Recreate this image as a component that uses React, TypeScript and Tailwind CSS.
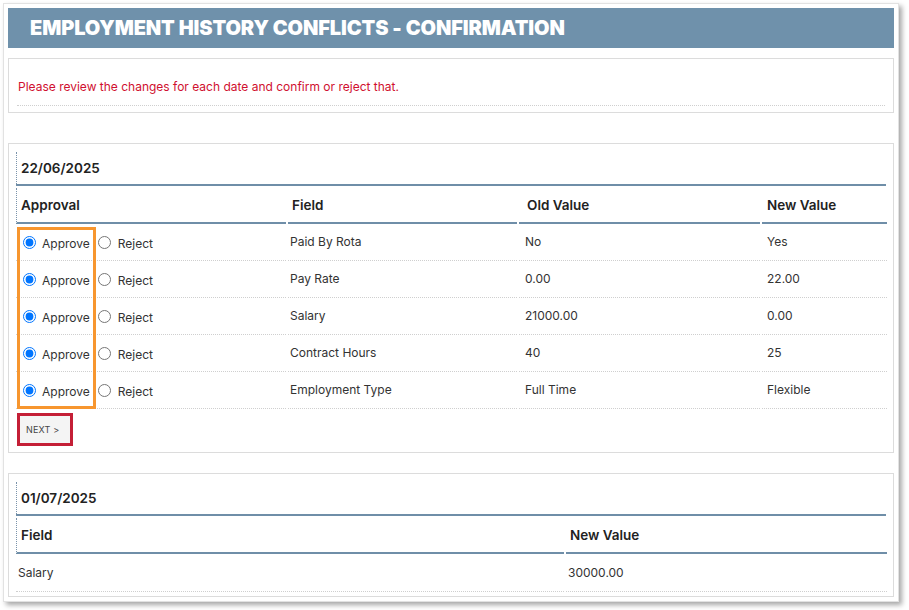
import React from "react";

const rows = [
  { field: "Paid By Rota", oldV: "No", newV: "Yes" },
  { field: "Pay Rate", oldV: "0.00", newV: "22.00" },
  { field: "Salary", oldV: "21000.00", newV: "0.00" },
  { field: "Contract Hours", oldV: "40", newV: "25" },
  { field: "Employment Type", oldV: "Full Time", newV: "Flexible" },
];

const font = { fontFamily: "Inter, 'Noto Sans', sans-serif" };

export default function App() {
  return (
    <div className="w-[909px] h-[610px] bg-white pt-[3px] pl-[3px]" style={font}>
      <div className="w-[896px] h-[599px] bg-white border border-[#e2e2e2] shadow-[3px_3px_5px_rgba(0,0,0,0.35)] p-[4px] flex flex-col">
        {/* Title */}
        <div className="h-[40px] bg-[#6f91ab] flex items-center pl-[22px]">
          <h1 className="text-white text-[20px] font-black tracking-[-0.1px] leading-none">
            EMPLOYMENT HISTORY CONFLICTS - CONFIRMATION
          </h1>
        </div>

        {/* Info */}
        <div className="mt-[10px] h-[55px] border border-[#dcdcdc] px-[8px] pt-[20px]">
          <p className="text-[12px] text-[#d0102f] leading-[16px] pl-[1px]">
            Please review the changes for each date and confirm or reject that.
          </p>
          <div className="mt-[10px] border-b border-dotted border-[#cfcfcf]" />
        </div>

        {/* Section 1 */}
        <div className="mt-[30px] h-[311px] border border-[#dcdcdc] px-[7px] pt-[8px]">
          <div className="border-l border-dotted border-[#7a93ab] h-[32px] flex items-center pl-[4px]">
            <span className="text-[13.5px] font-semibold text-[#222]">22/06/2025</span>
          </div>
          <div className="h-[2px] bg-[#6f8ea8]" />
          <div className="relative">
            <div className="grid grid-cols-[270px_229px_241px_125px] gap-x-[2px] text-[12px] text-[#333]">
              <div className="mt-[2px] h-[36px] border-l border-dotted border-[#7a93ab] border-b-2 border-b-[#6f8ea8] flex items-center pl-[4px] text-[13.5px] font-semibold text-[#222]" style={{ borderBottomStyle: "solid" }}>
                Approval
              </div>
              <div className="mt-[2px] h-[36px] border-b-2 border-[#6f8ea8] flex items-center pl-[4px] text-[13.5px] font-semibold text-[#222]">
                Field
              </div>
              <div className="mt-[2px] h-[36px] border-b-2 border-[#6f8ea8] flex items-center pl-[8px] text-[13.5px] font-semibold text-[#222]">
                Old Value
              </div>
              <div className="mt-[2px] h-[36px] border-b-2 border-[#6f8ea8] flex items-center pl-[5px] text-[13.5px] font-semibold text-[#222]">
                New Value
              </div>
              {rows.map((r, i) => (
                <React.Fragment key={i}>
                  <div className="h-[37px] border-b border-dotted border-[#cfcfcf] flex items-center pl-[7px] pt-[1px]">
                    <label className="flex items-center">
                      <input type="radio" name={"r" + i} defaultChecked className="m-0 w-[13px] h-[13px]" />
                      <span className="ml-[6px] mt-[3px]">Approve</span>
                    </label>
                    <label className="flex items-center ml-[8px]">
                      <input type="radio" name={"r" + i} className="m-0 w-[13px] h-[13px]" />
                      <span className="ml-[7px] mt-[3px]">Reject</span>
                    </label>
                  </div>
                  <div className="h-[37px] border-b border-dotted border-[#cfcfcf] flex items-center pl-[2px]">
                    {r.field}
                  </div>
                  <div className="h-[37px] border-b border-dotted border-[#cfcfcf] flex items-center pl-[6px]">
                    {r.oldV}
                  </div>
                  <div className="h-[37px] border-b border-dotted border-[#cfcfcf] flex items-center pl-[5px]">
                    {r.newV}
                  </div>
                </React.Fragment>
              ))}
            </div>
            <div className="absolute left-[1px] top-[41px] w-[79px] h-[182px] border-[3px] border-[#f7962f] pointer-events-none" />
          </div>
          <div className="mt-[4px] ml-[1px] w-[56px] h-[33px] border-[3px] border-[#c41f36] bg-[#f4f4f4] flex items-center pl-[6px]">
            <span className="text-[9px] text-[#444] tracking-[0.2px]">NEXT &gt;</span>
          </div>
        </div>

        {/* Section 2 */}
        <div className="mt-[20px] h-[124px] border border-[#dcdcdc] px-[7px] pt-[8px]">
          <div className="border-l border-dotted border-[#7a93ab] h-[32px] flex items-center pl-[4px]">
            <span className="text-[13.5px] font-semibold text-[#222]">01/07/2025</span>
          </div>
          <div className="h-[2px] bg-[#6f8ea8]" />
          <div className="grid grid-cols-[548px_321px] gap-x-[2px] text-[12px] text-[#333]">
            <div className="mt-[2px] h-[36px] border-l border-dotted border-[#7a93ab] border-b-2 border-b-[#6f8ea8] flex items-center pl-[4px] text-[13.5px] font-semibold text-[#222]" style={{ borderBottomStyle: "solid" }}>
              Field
            </div>
            <div className="mt-[2px] h-[36px] border-b-2 border-[#6f8ea8] flex items-center pl-[4px] text-[13.5px] font-semibold text-[#222]">
              New Value
            </div>
            <div className="h-[38px] border-b border-dotted border-[#cfcfcf] flex items-center pl-[2px]">
              Salary
            </div>
            <div className="h-[38px] border-b border-dotted border-[#cfcfcf] flex items-center pl-[2px]">
              30000.00
            </div>
          </div>
        </div>
      </div>
    </div>
  );
}
